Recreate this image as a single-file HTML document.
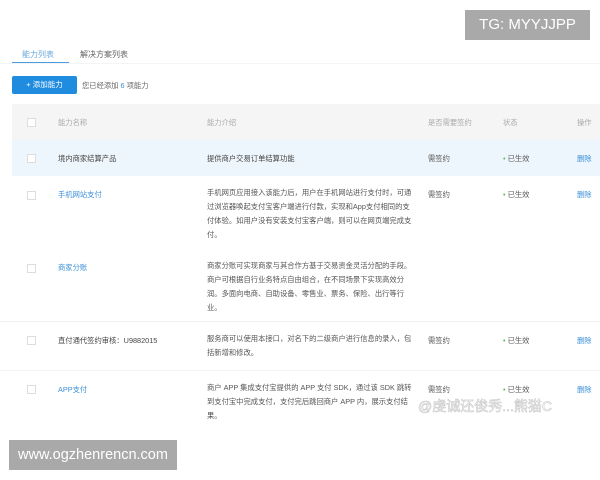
<!DOCTYPE html>
<html><head><meta charset="utf-8"><style>
body{margin:0;width:600px;height:480px;background:#fff;position:relative;overflow:hidden;font-family:"Liberation Sans","Noto Sans CJK SC",sans-serif;font-size:7.3px;color:#555}
.a{position:absolute;white-space:nowrap}
.cb{position:absolute;left:27px;width:7px;height:7px;border:1px solid #ddd;background:#fff}
.intro{position:absolute;left:207px;width:206px;line-height:14px;white-space:normal;color:#555}
.blue{color:#3a8fd6}
.dot{color:#5cb85c}
</style></head><body>
<div class="a" style="left:22px;top:49px;color:#6aa8dc;font-size:8px">能力列表</div>
<div class="a" style="left:80px;top:49px;color:#666;font-size:8px">解决方案列表</div>
<div class="a" style="left:12px;top:62px;width:57px;height:1.5px;background:#4a9be0"></div>
<div class="a" style="left:0;top:63px;width:600px;height:1px;background:#f4f4f4"></div>
<div class="a" style="left:12px;top:76px;width:65px;height:18px;background:#1f8ce0;border-radius:2px;color:#fff;line-height:18px;text-align:center;font-size:7.5px">+ 添加能力</div>
<div class="a" style="left:82px;top:81px;color:#666">您已经添加 <span class="blue">6</span> 项能力</div>
<div class="a" style="left:12px;top:104px;width:588px;height:36px;background:#f5f5f5"></div>
<div class="cb" style="top:118px"></div>
<div class="a" style="left:58px;top:118px;color:#aaa">能力名称</div>
<div class="a" style="left:207px;top:118px;color:#aaa">能力介绍</div>
<div class="a" style="left:428px;top:118px;color:#aaa">是否需要签约</div>
<div class="a" style="left:503px;top:118px;color:#aaa">状态</div>
<div class="a" style="left:577px;top:118px;color:#aaa">操作</div>
<div class="a" style="left:12px;top:140px;width:588px;height:36px;background:#eef6fd"></div>
<div class="cb" style="top:154px"></div>
<div class="a" style="left:58px;top:154px;color:#444">境内商家结算产品</div>
<div class="a" style="left:207px;top:154px;color:#444">提供商户交易订单结算功能</div>
<div class="a" style="left:428px;top:154px">需签约</div>
<div class="a" style="left:503px;top:154px"><span class="dot">•</span> 已生效</div>
<div class="a blue" style="left:577px;top:154px">删除</div>

<div class="cb" style="top:191px"></div>
<div class="a blue" style="left:58px;top:190px">手机网站支付</div>
<div class="intro" style="top:186px">手机网页应用接入该能力后，用户在手机网站进行支付时，可通过浏览器唤起支付宝客户端进行付款，实现和App支付相同的支付体验。如用户没有安装支付宝客户端，则可以在网页端完成支付。</div>
<div class="a" style="left:428px;top:190px">需签约</div>
<div class="a" style="left:503px;top:190px"><span class="dot">•</span> 已生效</div>
<div class="a blue" style="left:577px;top:190px">删除</div>

<div class="cb" style="top:264px"></div>
<div class="a blue" style="left:58px;top:263px">商家分账</div>
<div class="intro" style="top:259px">商家分账可实现商家与其合作方基于交易资金灵活分配的手段。商户可根据自行业务特点自由组合，在不同场景下实现高效分润。多面向电商、自助设备、零售业、票务、保险、出行等行业。</div>
<div class="a" style="left:0;top:321px;width:600px;height:1px;background:#f0f0f0"></div>

<div class="cb" style="top:336px"></div>
<div class="a" style="left:58px;top:336px;color:#444">直付通代签约审核：U9882015</div>
<div class="intro" style="top:332px">服务商可以使用本接口，对名下的二级商户进行信息的录入，包括新增和修改。</div>
<div class="a" style="left:428px;top:336px">需签约</div>
<div class="a" style="left:503px;top:336px"><span class="dot">•</span> 已生效</div>
<div class="a blue" style="left:577px;top:336px">删除</div>
<div class="a" style="left:0;top:370px;width:600px;height:1px;background:#f4f4f4"></div>

<div class="cb" style="top:385px"></div>
<div class="a blue" style="left:58px;top:385px">APP支付</div>
<div class="intro" style="top:381px">商户 APP 集成支付宝提供的 APP 支付 SDK，通过该 SDK 跳转到支付宝中完成支付，支付完后跳回商户 APP 内，展示支付结果。</div>
<div class="a" style="left:428px;top:385px">需签约</div>
<div class="a" style="left:503px;top:385px"><span class="dot">•</span> 已生效</div>
<div class="a blue" style="left:577px;top:385px">删除</div>

<div class="a" style="left:418px;top:396px;font-size:14px;color:#fff;-webkit-text-stroke:0.6px #c8c8c8">@虔诚还俊秀...熊猫C</div>
<div class="a" style="left:465px;top:10px;width:125px;height:30px;background:#a9a9a9;color:#fff;font-size:15px;line-height:30px;text-align:center">TG: MYYJJPP</div>
<div class="a" style="left:9px;top:440px;width:168px;height:30px;background:#a9a9a9;color:#fff;font-size:14.5px;line-height:30px;text-align:center">www.ogzhenrencn.com</div>
</body></html>
